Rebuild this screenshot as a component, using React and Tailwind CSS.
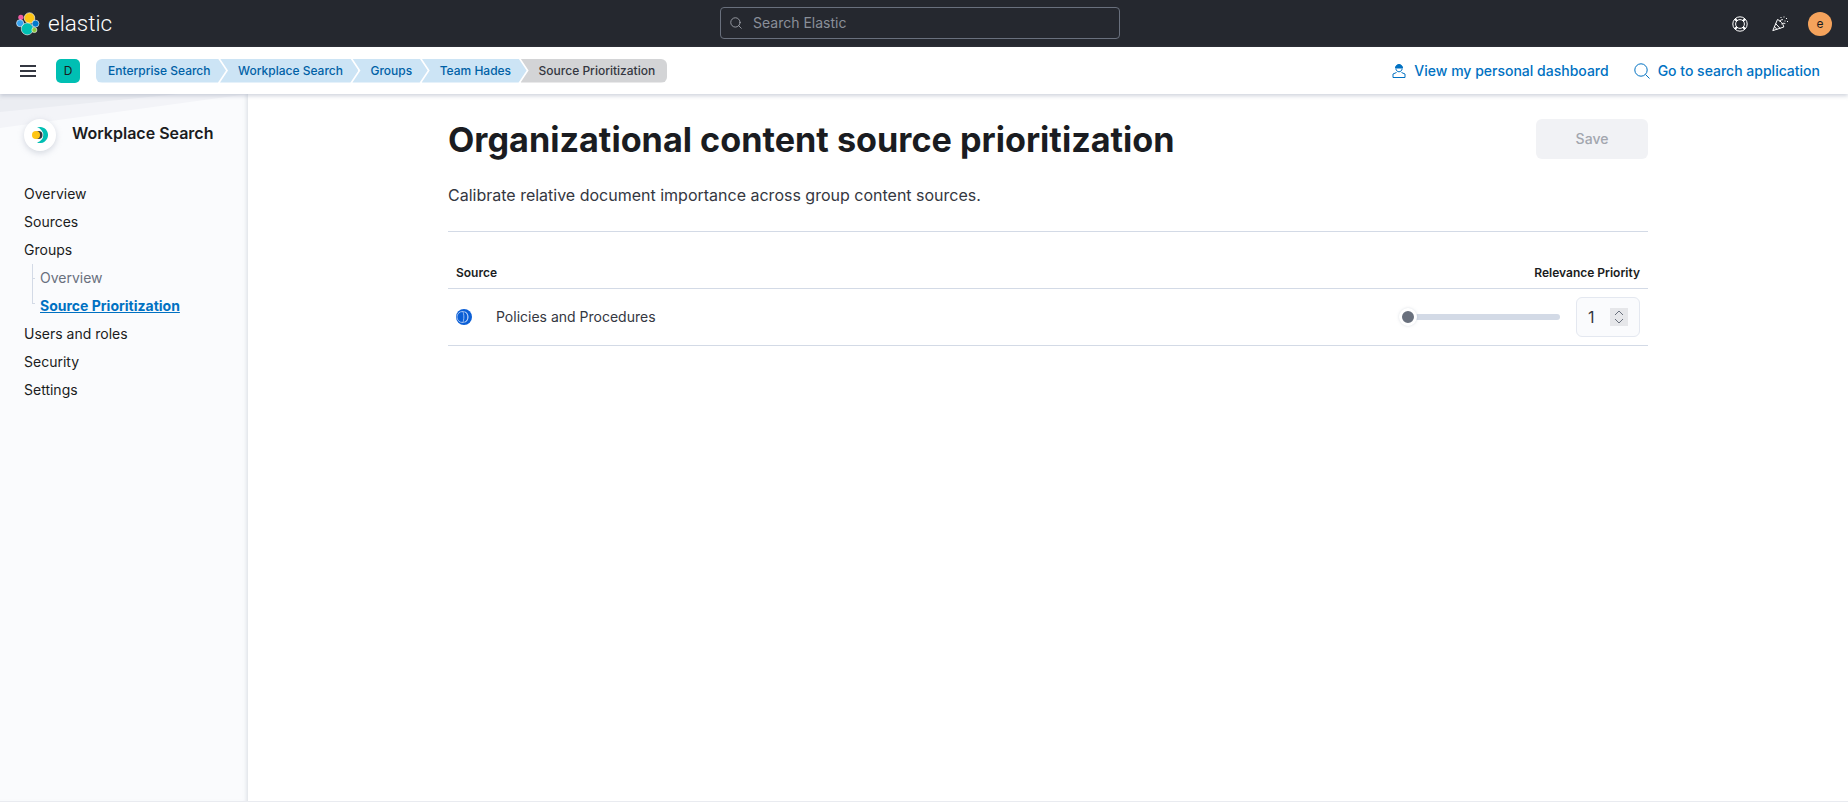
import { Search } from "lucide-react";

const crumbs = ["Enterprise Search", "Workplace Search", "Groups", "Team Hades"];

const navAfter = ["Users and roles", "Security", "Settings"];

function ElasticLogo() {
  return (
    <svg viewBox="0 0 32 32" className="w-6 h-6">
      <circle cx="6.500" cy="7" r="3.500" fill="#ef5ba1" />
      <circle cx="18" cy="8" r="7" fill="#fec514" stroke="#fff" strokeWidth="0.800" />
      <circle cx="5.500" cy="15" r="4.800" fill="#36a2ef" stroke="#fff" strokeWidth="0.800" />
      <circle cx="26" cy="15.500" r="4.600" fill="#0077cc" stroke="#fff" strokeWidth="0.800" />
      <circle cx="15" cy="22.500" r="8" fill="#00bfb3" stroke="#fff" strokeWidth="0.800" />
      <circle cx="24.500" cy="24" r="3.400" fill="#8cc63f" stroke="#fff" strokeWidth="0.800" />
    </svg>
  );
}

function LifeBuoy() {
  return (
    <svg viewBox="0 0 16 16" className="w-4 h-4" fill="none" stroke="#fff" strokeWidth="1">
      <circle cx="8" cy="8" r="7.200" />
      <circle cx="8" cy="8" r="4.400" />
      <path d="M3 3l2 2M13 3l-2 2M3 13l2-2M13 13l-2-2" strokeWidth="2.200" />
    </svg>
  );
}

function Party() {
  return (
    <svg viewBox="0 0 16 16" className="w-4 h-4" fill="none" stroke="#fff" strokeWidth="1">
      <path d="M5.500 3.500L0.800 14.600l11-3.600c-.4-2.800-3.400-6.600-6.300-7.500z" />
      <path d="M3.600 7.500l4.600 5M2.400 10.500l2.600 3" />
      <path d="M7.500 5.500c1-1.400 2-2 3.400-1.800M9.500 8c1-.8 2.200-1 3.800-.4" />
      <path d="M9 1v1M12 .5v1M14.500 2v1M13 4.500v1M15.500 5v1" strokeDasharray="1 1" />
    </svg>
  );
}

function PersonIcon() {
  return (
    <svg viewBox="0 0 14 16" className="w-[14px] h-4" fill="none" stroke="#0071c2" strokeWidth="1">
      <path d="M3.500 5c0-2.200 1.500-3.500 3.500-3.500s3.500 1.300 3.500 3.500h-7z" fill="#0071c2" />
      <path d="M3.800 5.500c.3 2 1.500 3.300 3.200 3.300s2.900-1.300 3.200-3.300" />
      <path d="M4.500 9.500L1 11v3.500h12V11L9.500 9.500" />
    </svg>
  );
}

function SearchGlass() {
  return (
    <svg viewBox="0 0 16 16" className="w-4 h-4" fill="none" stroke="#0071c2" strokeWidth="1">
      <circle cx="7" cy="7" r="6.200" />
      <path d="M11.500 11.500l4 4" />
    </svg>
  );
}

function MenuIcon() {
  return (
    <svg viewBox="0 0 16 12" className="w-4 h-3" fill="#343741">
      <rect y="0" width="16" height="2" />
      <rect y="5" width="16" height="2" />
      <rect y="10" width="16" height="2" />
    </svg>
  );
}

function WorkplaceLogo() {
  return (
    <svg viewBox="0 0 16 16" className="w-4 h-4">
      <path d="M5 .6A8 8 0 1 1 5 15.400A7.500 7.500 0 0 0 5 .6z" fill="#00bfb3" />
      <circle cx="6.500" cy="8" r="4" fill="#343741" />
      <circle cx="4" cy="8" r="4" fill="#fec514" />
    </svg>
  );
}

function SourceIcon() {
  return (
    <svg viewBox="0 0 16 16" className="w-4 h-4">
      <circle cx="8" cy="8" r="8" fill="#0b5fd6" />
      <circle cx="6.500" cy="8" r="5.500" fill="none" stroke="#cfe0fa" strokeWidth="0.700" />
      <path d="M9.500 2.800c3 1.600 3.300 8.600 0 10.400M6.500 2.500c1.800 1.400 1.800 9.600 0 11" fill="none" stroke="#cfe0fa" strokeWidth="0.700" />
    </svg>
  );
}

function Chevron({ up }) {
  return (
    <svg viewBox="0 0 10 6" className="w-[10px] h-[6px]" fill="none" stroke="#69707d" strokeWidth="1">
      <path d={up ? "M1 5l4-4 4 4" : "M1 1l4 4 4-4"} />
    </svg>
  );
}

function Crumb({ label, first }) {
  return (
    <a
      className={`h-6 flex items-center bg-[#cce4f5] text-[#0061a6] pr-[15.5px] ${
        first
          ? "pl-[12px] rounded-l-[6px] [clip-path:polygon(0_0,calc(100%-8px)_0,100%_50%,calc(100%-8px)_100%,0_100%)]"
          : "-ml-[6px] pl-[18px] [clip-path:polygon(0_0,calc(100%-8px)_0,100%_50%,calc(100%-8px)_100%,0_100%,8px_50%)]"
      }`}
    >
      {label}
    </a>
  );
}

export default function App() {
  return (
    <div className="w-full h-[802px] flex flex-col overflow-hidden bg-white text-[#1a1c21] font-['Inter',sans-serif]">
      <header className="h-[47px] shrink-0 bg-[#25282f] flex items-center justify-between pl-4 pr-4">
        <div className="w-[400px] flex items-center gap-2">
          <ElasticLogo />
          <span className="text-white text-[22.500px] font-light font-['Roboto',sans-serif]">elastic</span>
        </div>
        <div className="w-[400px] h-8 -mt-[2px] -ml-[8px] flex items-center gap-[10px] px-2 rounded-[4px] border border-[#69707d] bg-[#25282f] text-[#8a8f99] text-sm">
          <Search className="w-[14px] h-[14px] text-[#a2a6ae]" strokeWidth={1.500} />
          <span>Search Elastic</span>
        </div>
        <div className="w-[400px] flex items-center justify-end">
          <LifeBuoy />
          <div className="ml-6">
            <Party />
          </div>
          <div className="ml-5 w-6 h-6 rounded-full bg-[#f5a35c] flex items-center justify-center text-xs text-[#1a1c21]">e</div>
        </div>
      </header>

      <div className="relative z-20 h-[47px] shrink-0 bg-white shadow-[0_2px_4px_rgba(152,162,179,0.45)] flex items-center justify-between pl-5 pr-[28px]">
        <div className="flex items-center">
          <MenuIcon />
          <div className="ml-[20px] w-6 h-6 rounded-[5px] bg-[#00bfb3] flex items-center justify-center text-xs text-[#1a1c21]">D</div>
          <nav className="ml-4 flex items-center text-xs font-medium">
            {crumbs.map((label, i) => (
              <Crumb key={label} label={label} first={i === 0} />
            ))}
            <span className="-ml-[6px] h-6 pl-[18px] pr-3 flex items-center bg-[#d3d4d6] text-[#343741] rounded-r-[6px] [clip-path:polygon(0_0,100%_0,100%_100%,0_100%,8px_50%)]">
              Source Prioritization
            </span>
          </nav>
        </div>
        <div className="flex items-center gap-[25px] text-[#0071c2] text-sm font-medium">
          <a className="flex items-center gap-2">
            <PersonIcon />
            View my personal dashboard
          </a>
          <a className="flex items-center gap-2">
            <SearchGlass />
            Go to search application
          </a>
        </div>
      </div>

      <div className="flex-1 flex min-h-0 border-b border-[#e9ebf0]">
        <aside className="relative w-[248px] shrink-0 bg-[#fafbfd] shadow-[inset_-4px_0_4px_-3px_rgba(152,162,179,0.35)] px-6 pt-[25px]">
          <div className="absolute left-0 top-0 w-[248px] h-[34px] bg-[#f3f4f8] [clip-path:polygon(0_0,100%_0,0_100%)]" />
          <div className="absolute left-0 top-0 w-[178px] h-[18px] bg-[#ebedf2] [clip-path:polygon(0_0,100%_0,0_100%)]" />
          <div className="relative flex items-center gap-[16px]">
            <div className="w-8 h-8 rounded-full bg-white shadow-[0_2px_6px_rgba(152,162,179,0.4)] flex items-center justify-center">
              <WorkplaceLogo />
            </div>
            <h2 className="text-base font-semibold -mt-[4px]">Workplace Search</h2>
          </div>
          <ul className="mt-[29px] text-sm leading-[28px]">
            <li>Overview</li>
            <li>Sources</li>
            <li>Groups</li>
            <li className="relative pl-[16px]">
              <div className="absolute left-[8px] top-0 h-[40px] w-[3px] border-l border-b border-[#d3dae6]" />
              <div className="absolute left-[8px] top-[14px] w-[3px] border-t border-[#d3dae6]" />
              <div className="text-[#69707d]">Overview</div>
              <div className="text-[#0071c2] font-bold underline">Source Prioritization</div>
            </li>
            {navAfter.map((n) => (
              <li key={n}>{n}</li>
            ))}
          </ul>
        </aside>

        <main className="flex-1 flex justify-center">
          <div className="w-[1200px] pt-[25px]">
            <div className="flex items-start justify-between">
              <h1 className="text-[34.2px] leading-[42px] font-bold">Organizational content source prioritization</h1>
              <button className="w-[112px] h-10 rounded-[6px] bg-[#f1f2f5] text-[#a2a6ae] text-sm font-medium">Save</button>
            </div>
            <p className="mt-[22px] text-base leading-[24px] text-[#343741]">
              Calibrate relative document importance across group content sources.
            </p>
            <div className="mt-[24px] border-t border-[#d3dae6]" />
            <div className="mt-[24px] h-[33px] pt-[1px] flex items-center justify-between px-2 border-b border-[#d3dae6] text-xs font-semibold">
              <span>Source</span>
              <span>Relevance Priority</span>
            </div>
            <div className="h-[57px] flex items-center justify-between px-2 border-b border-[#d3dae6]">
              <div className="flex items-center gap-[24px] text-sm text-[#343741]">
                <SourceIcon />
                <span>Policies and Procedures</span>
              </div>
              <div className="flex items-center">
                <div className="relative w-[147px] h-[6px] rounded-full bg-[#d3dae6]">
                  <div className="absolute -left-[14px] -top-[6px] w-[18px] h-[18px] rounded-full bg-[#69707d] border-[3px] border-white shadow-[0_0_3px_rgba(152,162,179,0.35)]" />
                </div>
                <div className="ml-[16px] w-[64px] h-10 rounded-[6px] border border-[#e4e8f0] bg-[#fafbfd] flex items-center pl-[11px] pr-[11px] justify-between text-[#343741]">
                  <span className="text-base">1</span>
                  <div className="w-[18px] h-[18px] bg-[#e6e7ea] flex flex-col items-center justify-center gap-[2px]">
                    <Chevron up />
                    <Chevron />
                  </div>
                </div>
              </div>
            </div>
          </div>
        </main>
      </div>
    </div>
  );
}
